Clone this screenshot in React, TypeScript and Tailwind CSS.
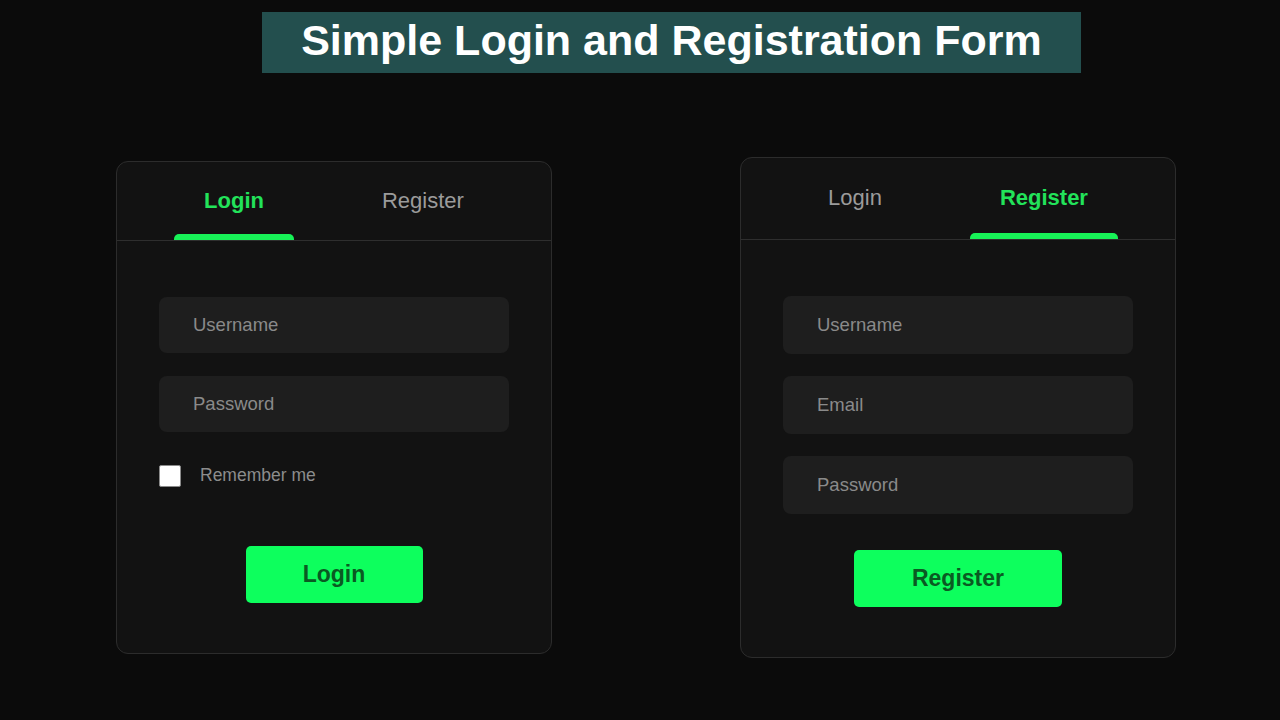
export default function App() {
  return (
    <div className="min-h-screen w-full bg-[#0b0b0b] font-['Liberation_Sans',Arial,sans-serif] overflow-hidden">
      {/* Title banner */}
      <div className="pt-[12px] flex justify-center">
        <div className="ml-[63px] w-[819px] h-[61px] pb-[5px] bg-[#234f4e] flex items-center justify-center">
          <h1 className="text-white font-bold text-[43px] leading-none">
            Simple Login and Registration Form
          </h1>
        </div>
      </div>

      {/* Cards */}
      <div className="mt-[84px] pl-[116px] flex items-center gap-[188px]">
        {/* Login card */}
        <div className="w-[436px] bg-[#121212] border border-[#2c2c2c] rounded-[12px]">
          <Tabs active="login" tall={false} />
          <div className="px-[42px] pt-[56px] pb-[50px]">
            <div className="flex flex-col gap-[23px]">
              <Field placeholder="Username" h="h-[56px]" />
              <Field placeholder="Password" h="h-[56px]" />
            </div>
            <div className="mt-[30px] flex items-center gap-[19px]">
              <div className="w-[22px] h-[22px] bg-white border border-[#8a8a8a] rounded-[2px]" />
              <span className="text-[17.5px] text-[#8c8c8c]">Remember me</span>
            </div>
            <div className="mt-[57px] flex justify-center">
              <button className="h-[57px] w-[177px] bg-[#0dff5d] rounded-[5px] text-[23px] font-bold text-[#0a5a22]">
                Login
              </button>
            </div>
          </div>
        </div>

        {/* Register card */}
        <div className="w-[436px] bg-[#121212] border border-[#2c2c2c] rounded-[12px]">
          <Tabs active="register" tall={true} />
          <div className="px-[42px] pt-[56px] pb-[50px]">
            <div className="flex flex-col gap-[22px]">
              <Field placeholder="Username" h="h-[58px]" />
              <Field placeholder="Email" h="h-[58px]" />
              <Field placeholder="Password" h="h-[58px]" />
            </div>
            <div className="mt-[36px] flex justify-center">
              <button className="h-[57px] w-[208px] bg-[#0dff5d] rounded-[5px] text-[23px] font-bold text-[#0a5a22]">
                Register
              </button>
            </div>
          </div>
        </div>
      </div>
    </div>
  );
}

function Tabs({ active, tall }: { active: "login" | "register"; tall: boolean }) {
  return (
    <div
      className={
        tall
          ? "h-[82px] border-b border-[#2e2e2e] flex justify-center gap-[58px]"
          : "h-[79px] border-b border-[#2e2e2e] flex justify-center gap-[58px]"
      }
    >
      <Tab label="Login" on={active === "login"} tall={tall} />
      <Tab label="Register" on={active === "register"} tall={tall} />
    </div>
  );
}

function Tab({ label, on, tall }: { label: string; on: boolean; tall: boolean }) {
  const pad = tall ? "pt-[27px]" : "pt-[26px]";
  return (
    <div className="flex flex-col justify-between">
      <span
        className={
          on
            ? `px-[30px] ${pad} text-[22px] leading-[26px] font-bold text-[#22e35a]`
            : `px-[30px] ${pad} text-[22px] leading-[26px] text-[#9b9b9b]`
        }
      >
        {label}
      </span>
      <div className={on ? "h-[6px] rounded-t-[5px] bg-[#17f257]" : "h-[6px]"} />
    </div>
  );
}

function Field({ placeholder, h }: { placeholder: string; h: string }) {
  return (
    <input
      type="text"
      placeholder={placeholder}
      className={`${h} w-full rounded-[8px] bg-[#1e1e1e] px-[34px] text-[18.5px] text-white placeholder:text-[#8a8a8a] outline-none`}
    />
  );
}
